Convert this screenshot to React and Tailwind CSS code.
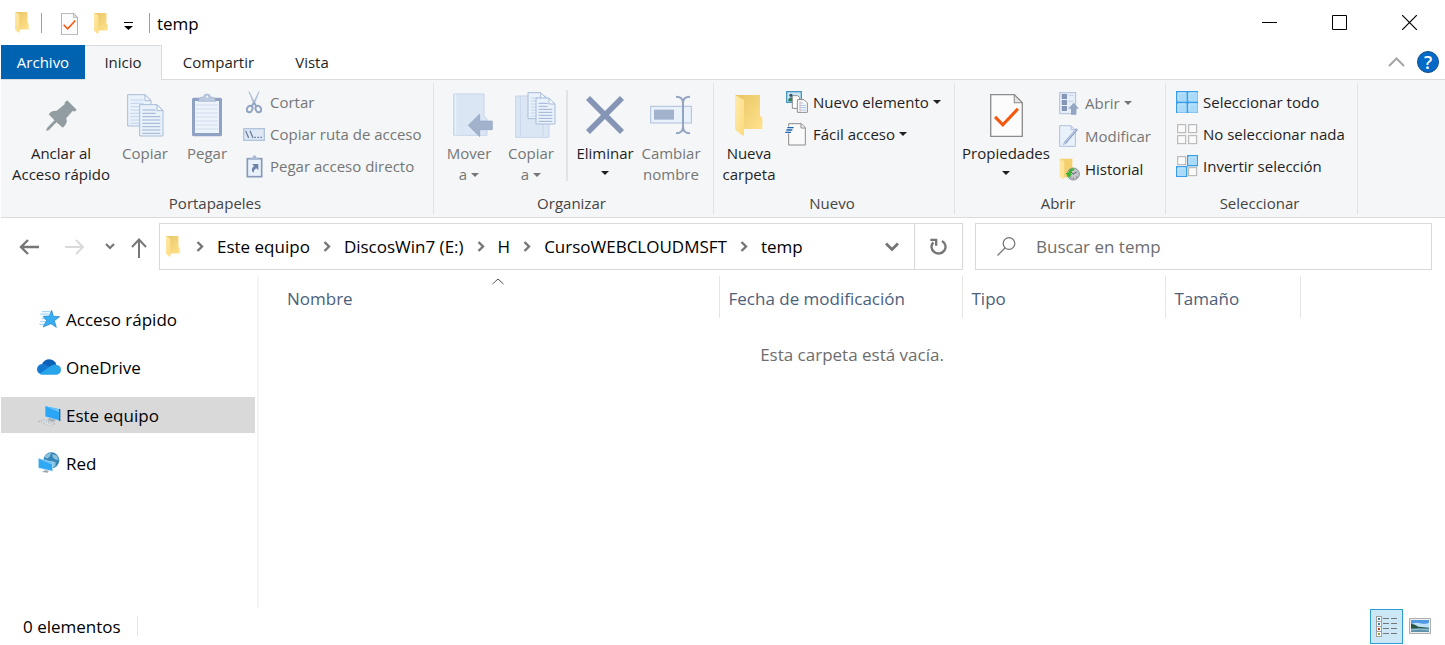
import React from "react";

const ICON = "shrink-0";

function Folder({ w, h }) {
  return (
    <svg className={ICON} width={w} height={h} viewBox="0 0 84 122" preserveAspectRatio="none" aria-hidden="true">
      <defs>
        <linearGradient id="fback" x1="0" y1="0" x2="1" y2="1">
          <stop offset="0" stopColor="#e8c565" />
          <stop offset="1" stopColor="#ffe28c" />
        </linearGradient>
        <linearGradient id="fflap" x1="0" y1="0" x2="1" y2="1">
          <stop offset="0" stopColor="#ffebac" />
          <stop offset="1" stopColor="#fddb7c" />
        </linearGradient>
      </defs>
      <path d="M0 0H75V62L82 68V101H20Z" fill="url(#fback)" />
      <path d="M0 0L27 15V121L20 119L0 103Z" fill="url(#fflap)" />
    </svg>
  );
}

function CheckPage({ w, h }) {
  return (
    <svg className={ICON} width={w} height={h} viewBox="0 0 98 128" aria-hidden="true">
      <path d="M2 2H72L96 26V126H2Z" fill="#fcfcfc" stroke="#8c8c8c" strokeWidth="4" />
      <path d="M72 2V26H96Z" fill="#e6e6e6" stroke="#8c8c8c" strokeWidth="3" />
      <path d="M15 68L38 92L83 44" fill="none" stroke="#f4570d" strokeWidth="9" />
    </svg>
  );
}

function Pin() {
  return (
    <svg className={ICON} width="31" height="31" viewBox="140 296 92 92" aria-hidden="true">
      <path d="M203 297L231 325L226 330L219 329L200 350Q206 364 190 378L171 362L148 386L140 387L143 379L165 356L148 338Q156 327 172 328L196 308L195 304Z" fill="#929da2" />
    </svg>
  );
}

function Sheet({ x, y, w, h, n, faint }) {
  const rows = [];
  for (let i = 0; i < n; i++) rows.push(y + 16 + (i * (h - 24)) / (n - 1));
  return (
    <g>
      <path d={`M${x} ${y}H${x + w - 18}L${x + w} ${y + 18}V${y + h}H${x}Z`} fill="#e9f1fb" stroke="#a9bcd8" strokeWidth="3" />
      {rows.map((r, i) => (
        <path key={i} d={`M${x + 8} ${r}H${x + w - (i < 2 ? 22 : 8)}`} stroke={faint ? "#c3d4ec" : "#9fb3d2"} strokeWidth="3" />
      ))}
      <path d={`M${x + w - 18} ${y}V${y + 18}H${x + w}Z`} fill="#f4f8fd" stroke="#a9bcd8" strokeWidth="3" />
    </g>
  );
}

function CopyIcon() {
  return (
    <svg className={ICON} width="37" height="43" viewBox="0 0 111 129" aria-hidden="true">
      <Sheet x={2} y={2} w={70} h={94} n={8} faint />
      <Sheet x={38} y={32} w={70} h={94} n={8} />
    </svg>
  );
}

function Paste() {
  return (
    <svg className={ICON} width="32" height="44" viewBox="0 0 96 132" aria-hidden="true">
      <rect x="3" y="14" width="90" height="116" rx="5" fill="#8fa2c4" />
      <rect x="12" y="24" width="72" height="96" fill="#edf3fb" />
      {[36, 48, 60, 72, 84, 96, 108].map((y) => (
        <path key={y} d={`M14 ${y}H82`} stroke="#d0deef" strokeWidth="3" />
      ))}
      <path d="M22 25Q22 12 38 12Q38 3 48 3Q58 3 58 12Q74 12 74 25Z" fill="#bccae0" stroke="#9badca" strokeWidth="2" />
      <circle cx="48" cy="11" r="3" fill="#f4f6f8" />
    </svg>
  );
}

function Scissors() {
  return (
    <svg className={ICON} width="16" height="23" viewBox="0 0 48 69" fill="none" aria-hidden="true">
      <path d="M9 2L30 43L24 41ZM39 2L18 43L24 41Z" fill="#b3c2d8" stroke="#b3c2d8" strokeWidth="3" />
      <ellipse cx="11" cy="54" rx="8" ry="10" transform="rotate(25 11 54)" stroke="#91a4c2" strokeWidth="6" />
      <ellipse cx="37" cy="54" rx="8" ry="10" transform="rotate(-25 37 54)" stroke="#91a4c2" strokeWidth="6" />
      <path d="M17 45L24 35L31 45" stroke="#91a4c2" strokeWidth="5" />
    </svg>
  );
}

function PathIcon() {
  return (
    <svg className={ICON} width="22" height="13" viewBox="0 0 66 39" aria-hidden="true">
      <rect x="2" y="2" width="62" height="35" fill="#dfe9f6" stroke="#b2c3dc" strokeWidth="4" />
      <path d="M8 8L17 30M21 8L30 30" stroke="#6e7f9e" strokeWidth="4" />
      <path d="M34 28h5M43 28h5M52 28h5" stroke="#6e7f9e" strokeWidth="4" />
    </svg>
  );
}

function PasteLink() {
  return (
    <svg className={ICON} width="17" height="23" viewBox="0 0 51 69" aria-hidden="true">
      <rect x="4" y="11" width="43" height="54" fill="#e9f1fb" stroke="#8799bb" strokeWidth="5" />
      <path d="M13 14V8H20Q20 1 25 1Q31 1 31 8H38V14Z" fill="#a9b9d3" />
      <path d="M18 27H37V46L31 40Q23 44 22 54Q12 42 24 33Z" fill="#6f82a8" />
    </svg>
  );
}

function MoveTo() {
  return (
    <svg className={ICON} width="48" height="44" viewBox="-24 0 144 132" aria-hidden="true">
      <path d="M2 3H93V70L102 78V127H2Z" fill="#dbe6f5" stroke="#c6d5ea" strokeWidth="3" />
      <path d="M8 4V127" stroke="#edf3fb" strokeWidth="3" />
      <path d="M46 97L80 63V84H118V110H80V131Z" fill="#a3b2cc" stroke="#93a4c1" strokeWidth="2" />
    </svg>
  );
}

function CopyTo() {
  return (
    <svg className={ICON} width="50" height="46" viewBox="-27 0 150 138" aria-hidden="true">
      <path d="M2 12H93V85L102 91V136H2Z" fill="#dbe6f5" stroke="#c6d5ea" strokeWidth="3" />
      <path d="M16 13V136M84 96V136" stroke="#c9d7ea" strokeWidth="3" />
      <Sheet x={39} y={2} w={56} h={78} n={7} faint />
      <Sheet x={63} y={18} w={57} h={78} n={7} />
    </svg>
  );
}

function DeleteX() {
  return (
    <svg className={ICON} width="38" height="38" viewBox="0 0 114 114" aria-hidden="true">
      <path d="M6 6L108 108M108 6L6 108" stroke="#8595b5" strokeWidth="17" />
    </svg>
  );
}

function Rename() {
  return (
    <svg className={ICON} width="42" height="40" viewBox="0 0 126 120" fill="none" aria-hidden="true">
      <rect x="2" y="34" width="122" height="50" fill="#e9f1fb" stroke="#adbfda" strokeWidth="3" />
      <rect x="12" y="44" width="60" height="30" fill="#a3b2cc" />
      <path d="M78 5Q99 5 99 24V96Q99 115 78 115M120 5Q99 5 99 24M99 96Q99 115 120 115" stroke="#93a4c1" strokeWidth="6" />
    </svg>
  );
}

function NewItem() {
  return (
    <svg className={ICON} width="22" height="22" viewBox="0 0 66 66" aria-hidden="true">
      <rect x="2" y="2" width="44" height="32" fill="#c8e8f8" stroke="#4a96bd" strokeWidth="4" />
      <circle cx="15" cy="13" r="5" fill="#35536b" />
      <path d="M6 30Q8 18 18 19L22 32Z" fill="#2e7d5b" />
      <path d="M19 14H35L41 20V52H19Z" fill="#fff" stroke="#8c8c8c" strokeWidth="3" />
      <path d="M34 26H54L64 36V64H34Z" fill="#fff" stroke="#8c8c8c" strokeWidth="3" />
      <path d="M40 36H52M40 43H60M40 50H60M40 57H60" stroke="#9cc3ea" strokeWidth="3" />
      <path d="M42 30V62" stroke="#e89a9a" strokeWidth="2" />
    </svg>
  );
}

function EasyAccess() {
  return (
    <svg className={ICON} width="24" height="23" viewBox="0 0 72 69" aria-hidden="true">
      <path d="M11 2H49L61 14V66H11Z" fill="#fafafa" stroke="#8c8c8c" strokeWidth="3" />
      <path d="M48 2V15H61" fill="none" stroke="#8c8c8c" strokeWidth="3" />
      <path d="M6 14H26M3 21H22M0 28H18" stroke="#f5f6f7" strokeWidth="7" />
      <path d="M7 14H26M4 21H22M1 28H18" stroke="#1e66ad" strokeWidth="4" />
    </svg>
  );
}

function OpenIcon() {
  return (
    <svg className={ICON} width="20" height="23" viewBox="0 0 60 69" aria-hidden="true">
      <rect x="2" y="2" width="48" height="63" fill="#e6eefa" stroke="#afc0da" strokeWidth="3" />
      {[8, 26, 44].map((y) => (
        <g key={y}>
          <rect x="10" y={y} width="12" height="11" fill="#8b9dbd" stroke="#7387ac" strokeWidth="3" />
          <path d={`M28 ${y + 2}H44`} stroke="#c4d2e8" strokeWidth="3" />
        </g>
      ))}
      <path d="M44 32L60 50H52V68H36V50H28Z" fill="#94a5c4" />
    </svg>
  );
}

function EditIcon() {
  return (
    <svg className={ICON} width="20" height="22" viewBox="0 0 60 66" aria-hidden="true">
      <path d="M2 2H36L49 15V64H2Z" fill="#e9f1fb" stroke="#afc0da" strokeWidth="3" />
      <path d="M36 2V14H46" fill="none" stroke="#afc0da" strokeWidth="3" />
      <path d="M54 12L19 53" stroke="#8fa4c8" strokeWidth="8" />
      <path d="M51 14L20 50" stroke="#c9d8ee" strokeWidth="3" />
      <path d="M16 50L23 56L10 61Z" fill="#afc0da" />
    </svg>
  );
}

function HistoryIcon() {
  return (
    <svg className={ICON} width="21" height="23" viewBox="0 0 63 69" aria-hidden="true">
      <path d="M2 2H40V58H10Z" fill="#f3cf6d" />
      <path d="M2 2L16 10V65L2 57Z" fill="#ffe49a" />
      <circle cx="43" cy="48" r="18" fill="#c3c6ca" stroke="#8b8f94" strokeWidth="3" />
      <path d="M34 40L43 48L53 42M34 57h3M52 57h3M43 62v-3M43 34v3" fill="none" stroke="#54585c" strokeWidth="3" />
      <path d="M47 32Q31 30 28 45H20L29 59L40 47H35Q36 38 45 36Z" fill="#35b52c" />
    </svg>
  );
}

function Squares({ on, big }) {
  const cells = [[3, 3], [36, 3], [3, 36], [36, 36]];
  return (
    <svg className={ICON} width="22" height="22" viewBox="0 0 66 66" aria-hidden="true">
      {cells.map(([x, y], i) =>
        on[i] ? (
          <g key={i}>
            <rect x={x - 1} y={y - 1} width={big ? 32 : 30} height={big ? 32 : 30} fill="#a9dafa" stroke="#3a9de8" strokeWidth="4" />
            <path d={`M${x + 3} ${y + 25}V${y + 3}H${x + 25}`} fill="none" stroke="#c9e8fd" strokeWidth="3" />
          </g>
        ) : (
          <rect key={i} x={x + 2} y={y + 2} width="24" height="24" fill="#fafafa" stroke="#b0b0b0" strokeWidth="3" />
        )
      )}
    </svg>
  );
}

function Star() {
  return (
    <svg className={ICON} width="21" height="18" viewBox="0 0 63 54" aria-hidden="true">
      <path d="M9 5H34M3 12H30M4 35H22M1 43H20M8 26H24" stroke="#58b6ee" strokeWidth="2" />
      <path d="M38 1L43 19L62 20L46 32L52 52L36 41L12 51L23 32L12 19L31 18Z" fill="#38aef2" stroke="#1680c9" strokeWidth="2" />
    </svg>
  );
}

function Cloud() {
  return (
    <svg className={ICON} width="24" height="16" viewBox="0 0 72 48" aria-hidden="true">
      <path d="M14 17Q22 1 37 1Q53 2 58 17L44 26Z" fill="#0a61b7" />
      <path d="M15 15Q27 13 40 27L16 46Q0 44 0 31Q1 17 15 15Z" fill="#1278d0" />
      <path d="M56 17Q72 18 72 32Q71 46 58 47H16Q10 47 8 44L40 22Q47 16 56 17Z" fill="#28a4ea" />
    </svg>
  );
}

function Computer() {
  return (
    <svg className={ICON} width="23" height="21" viewBox="0 0 69 63" aria-hidden="true">
      <path d="M21 2L67 12V48L21 35Z" fill="#2ba6f5" stroke="#d4e4ef" strokeWidth="2" />
      <path d="M22 4L65 14V22Z" fill="#71c5fb" />
      <path d="M67 12V48L63 49V12Z" fill="#56636d" />
      <path d="M34 39L54 45L46 51L28 45Z" fill="#a6b0b7" />
      <path d="M0 49L18 44L52 56L35 62Z" fill="#e8ebee" stroke="#a0a8ae" strokeWidth="2" strokeDasharray="5 3" />
      <path d="M8 49L40 58M14 47L46 56" stroke="#a4acb2" strokeWidth="2" strokeDasharray="5 3" />
    </svg>
  );
}

function Network() {
  return (
    <svg className={ICON} width="22" height="22" viewBox="0 0 66 66" aria-hidden="true">
      <circle cx="40" cy="25" r="24" fill="#3786b8" />
      <path d="M20 14Q29 2 39 3L35 14L26 20ZM43 6L57 11L61 25L51 22L44 16ZM38 27L53 30L52 42L43 47Z" fill="#8cc3de" />
      <path d="M1 19L44 31V58L1 48Z" fill="#2fa9f4" stroke="#dcecf5" strokeWidth="2" />
      <path d="M2 21L43 33V38Z" fill="#72c9fb" />
      <path d="M22 54L32 57L30 62L12 60Z" fill="#9da7ae" />
    </svg>
  );
}

function Caret({ className }) {
  return (
    <svg className={className} width="8" height="4" viewBox="0 0 8 4" aria-hidden="true">
      <path d="M0 0H8L4 4Z" fill="currentColor" />
    </svg>
  );
}

function Chevron({ right }) {
  return (
    <svg className={ICON} width={right ? 8 : 14} height={right ? 11 : 9} viewBox={right ? "0 0 8 11" : "0 0 14 9"} fill="none" stroke="#767676" aria-hidden="true">
      {right ? <path d="M1.5 1L6 5.5L1.5 10" strokeWidth="2.4" /> : <path d="M1 1.5L7 7.5L13 1.5" strokeWidth="2.8" />}
    </svg>
  );
}

function Big({ icon, a, b, caret, off, className }) {
  return (
    <button type="button" className={`flex shrink-0 flex-col items-center gap-1 pt-2 leading-[21px] ${off ? "text-[#767676]" : "text-[#1f1f1f]"} ${className}`}>
      <span className="flex h-12 items-center">{icon}</span>
      <span className="flex flex-col items-center whitespace-nowrap">
        <span>{a}</span>
        <span className="flex min-h-[18px] items-center gap-1">
          {b}
          {caret && <Caret />}
        </span>
      </span>
    </button>
  );
}

function Small({ icon, label, caret, off }) {
  return (
    <button type="button" className={`flex h-8 items-center gap-1 whitespace-nowrap ${off ? "text-[#767676]" : "text-[#1f1f1f]"}`}>
      <span className="flex w-6 justify-center">{icon}</span>
      <span>{label}</span>
      {caret && <Caret />}
    </button>
  );
}

function Group({ name, className, pad, children }) {
  return (
    <section aria-label={name} className={`flex shrink-0 flex-col border-r border-[#e1e3e5] ${className}`}>
      <div className={`flex h-[109px] ${pad}`}>{children}</div>
      <h2 className="pr-1 text-center leading-[22px] text-[#444]">{name}</h2>
    </section>
  );
}

const crumbs = ["Este equipo", "DiscosWin7 (E:)", "H", "CursoWEBCLOUDMSFT", "temp"];
const places = [
  { name: "Acceso rápido", icon: <Star /> },
  { name: "OneDrive", icon: <Cloud /> },
  { name: "Este equipo", icon: <Computer />, active: true },
  { name: "Red", icon: <Network /> },
];

export default function App() {
  return (
    <div className="flex min-h-screen flex-col overflow-x-hidden bg-white pl-px font-['Open_Sans','Noto_Sans',sans-serif] text-[15px] text-black">
      <header className="flex h-[45px] items-center">
        <div className="flex flex-1 items-center">
          <span className="ml-3.5"><Folder w={14} h={21} /></span>
          <span className="ml-3 h-5 w-px bg-[#a0a0a0]" />
          <button type="button" aria-label="Propiedades" className="ml-[19px] pt-0.5"><CheckPage w={17} h={22} /></button>
          <button type="button" aria-label="Nueva carpeta" className="ml-4 pt-0.5"><Folder w={14} h={21} /></button>
          <button type="button" aria-label="Personalizar barra de acceso rápido" className="ml-4 pt-1.5">
            <svg width="9" height="8" viewBox="0 0 9 8" aria-hidden="true"><path d="M0 0H9V1H0ZM0 4H9L4.500 8Z" /></svg>
          </button>
          <span className="ml-4 h-5 w-px bg-[#a0a0a0]" />
          <h1 className="ml-[7px] pt-0.5 text-[17px]">temp</h1>
        </div>
        <div className="flex pr-px">
          <button type="button" aria-label="Minimizar" className="flex h-11 w-[70px] items-center justify-center">
            <svg width="15" height="15" viewBox="0 0 15 15" aria-hidden="true"><path d="M0 7.500H15" stroke="#000" /></svg>
          </button>
          <button type="button" aria-label="Maximizar" className="flex h-11 w-[70px] items-center justify-center">
            <svg width="15" height="15" viewBox="0 0 15 15" fill="none" aria-hidden="true"><path d="M.5 .5H14.500V14.500H.5Z" stroke="#000" /></svg>
          </button>
          <button type="button" aria-label="Cerrar" className="flex h-11 w-[70px] items-center justify-center">
            <svg width="15" height="15" viewBox="0 0 15 15" aria-hidden="true"><path d="M0 0L15 15M15 0L0 15" stroke="#000" strokeWidth="1.200" /></svg>
          </button>
        </div>
      </header>

      <nav aria-label="Cinta" className="flex h-[35px] items-stretch text-[#1f1f1f]">
        <button type="button" className="w-[84px] border-b border-[#d9dbdd] bg-[#0063b1] text-white">Archivo</button>
        <button type="button" className="w-[77px] border-t border-r border-[#d9dbdd] bg-[#f5f6f7] pb-0.5">Inicio</button>
        <button type="button" className="w-[113px] border-b border-[#d9dbdd]">Compartir</button>
        <button type="button" className="w-[74px] border-b border-[#d9dbdd]">Vista</button>
        <span className="flex flex-1 items-center justify-end gap-3 border-b border-[#d9dbdd] pr-1.5">
          <button type="button" aria-label="Minimizar la cinta">
            <svg width="17" height="10" viewBox="0 0 17 10" fill="none" aria-hidden="true"><path d="M1 9L8.500 1.500L16 9" stroke="#a6a6a6" strokeWidth="2" /></svg>
          </button>
          <button type="button" aria-label="Ayuda" className="flex size-[22px] items-center justify-center rounded-full border border-[#174f86] bg-[#0569c8] text-lg leading-5 font-semibold text-white">?</button>
        </span>
      </nav>

      <div className="flex border-b border-[#d9dbdd] bg-[#f5f6f7] py-[3px]">
        <Group name="Portapapeles" className="w-[433px]" pad="pl-[7px]">
          <Big className="w-[106px]" icon={<Pin />} a="Anclar al" b="Acceso rápido" />
          <Big className="w-[62px]" off icon={<CopyIcon />} a="Copiar" />
          <Big className="w-[62px]" off icon={<Paste />} a="Pegar" />
          <div className="ml-1 flex flex-col pt-[3px]">
            <Small off icon={<Scissors />} label="Cortar" />
            <Small off icon={<PathIcon />} label="Copiar ruta de acceso" />
            <Small off icon={<PasteLink />} label="Pegar acceso directo" />
          </div>
        </Group>
        <Group name="Organizar" className="w-[280px]" pad="pl-1">
          <Big className="w-[62px]" off caret icon={<MoveTo />} a="Mover" b="a" />
          <Big className="w-[62px]" off caret icon={<CopyTo />} a="Copiar" b="a" />
          <span className="mx-1 mt-[7px] h-[91px] w-0.5 bg-[#e1e3e5]" />
          <Big className="w-[66px]" caret icon={<DeleteX />} a="Eliminar" />
          <Big className="w-[66px]" off icon={<Rename />} a="Cambiar" b="nombre" />
        </Group>
        <Group name="Nuevo" className="w-[241px]" pad="pl-0.5">
          <Big className="w-[66px]" icon={<Folder w={28} h={41} />} a="Nueva" b="carpeta" />
          <div className="ml-[3px] flex flex-col pt-[3px]">
            <Small caret icon={<NewItem />} label="Nuevo elemento" />
            <Small caret icon={<EasyAccess />} label="Fácil acceso" />
          </div>
        </Group>
        <Group name="Abrir" className="w-[211px]" pad="pl-0.5">
          <Big className="w-[98px]" caret icon={<CheckPage w={33} h={43} />} a="Propiedades" />
          <div className="ml-0.5 flex flex-col gap-px pt-1">
            <Small off caret icon={<OpenIcon />} label="Abrir" />
            <Small off icon={<EditIcon />} label="Modificar" />
            <Small icon={<HistoryIcon />} label="Historial" />
          </div>
        </Group>
        <Group name="Seleccionar" className="w-[192px]" pad="pl-[9px]">
          <div className="flex flex-col pt-[3px]">
            <Small icon={<Squares big on={[1, 1, 1, 1]} />} label="Seleccionar todo" />
            <Small icon={<Squares on={[0, 0, 0, 0]} />} label="No seleccionar nada" />
            <Small icon={<Squares on={[0, 1, 1, 0]} />} label="Invertir selección" />
          </div>
        </Group>
      </div>

      <div className="flex items-center pt-[5px] pr-[13px] pb-1.5 text-[17px]">
        <div className="flex w-[158px] shrink-0 items-center pl-[18px]">
          <button type="button" aria-label="Atrás">
            <svg width="21" height="16" viewBox="0 0 21 16" fill="none" stroke="#767676" strokeWidth="2.400" aria-hidden="true"><path d="M20 8H2M9 1L2 8L9 15" /></svg>
          </button>
          <button type="button" aria-label="Adelante" className="ml-6">
            <svg width="21" height="16" viewBox="0 0 21 16" fill="none" stroke="#dadada" strokeWidth="2" aria-hidden="true"><path d="M1 8H19M12 1L19 8L12 15" /></svg>
          </button>
          <button type="button" aria-label="Ubicaciones recientes" className="ml-5">
            <svg width="10" height="7" viewBox="0 0 10 7" fill="none" stroke="#767676" strokeWidth="2.200" aria-hidden="true"><path d="M1 1L5 5L9 1" /></svg>
          </button>
          <button type="button" aria-label="Subir" className="ml-4 pt-0.5">
            <svg width="16" height="20" viewBox="0 0 16 20" fill="none" stroke="#767676" strokeWidth="2" aria-hidden="true"><path d="M8 20V2M1 9L8 1.500L15 9" /></svg>
          </button>
        </div>
        <div className="grid flex-1 grid-cols-[804fr_457fr] gap-3">
          <div className="flex h-[47px] border border-[#d9d9d9]">
            <ol className="flex flex-1 items-center pl-1.5 whitespace-nowrap">
              <li className="mr-4"><Folder w={14} h={21} /></li>
              {crumbs.map((c, i) => (
                <li key={c} className={`flex items-center gap-[13px] ${i ? "pl-[13px]" : ""}`}>
                  <Chevron right />
                  <a href="#" className="text-black">{c}</a>
                </li>
              ))}
            </ol>
            <button type="button" aria-label="Ubicaciones anteriores" className="flex w-11 items-center justify-center"><Chevron /></button>
            <button type="button" aria-label="Actualizar" className="flex w-12 items-center justify-center border-l border-[#d9d9d9]">
              <svg width="17" height="17" viewBox="0 0 51 51" fill="none" aria-hidden="true">
                <path d="M36 9A21 20 0 1 1 10 13" stroke="#767676" strokeWidth="7" />
                <path d="M1 2H22V23H15V9H1Z" fill="#767676" />
              </svg>
            </button>
          </div>
          <label className="flex h-[47px] items-center gap-5 border border-[#d9d9d9] pl-[21px]">
            <svg className={ICON} width="19" height="19" viewBox="0 0 19 19" fill="none" stroke="#767676" strokeWidth="1.300" aria-hidden="true">
              <circle cx="12" cy="6.500" r="5.800" />
              <path d="M8 11L.5 18.500" />
            </svg>
            <input aria-label="Buscar en temp" placeholder="Buscar en temp" className="min-w-0 flex-1 bg-transparent outline-none placeholder:text-[#6d6d6d]" />
          </label>
        </div>
      </div>

      <main className="flex flex-1 text-[17px]">
        <nav aria-label="Ubicaciones" className="w-[258px] shrink-0 border-r-2 border-[#f5f5f5] pt-[25px]">
          <ul className="flex flex-col gap-3">
            {places.map((p) => (
              <li key={p.name}>
                <a href="#" className={`mr-0.5 flex h-9 items-center gap-1 pl-[35px] ${p.active ? "bg-[#d9d9d9]" : ""}`}>
                  <span className="flex w-[26px] justify-center">{p.icon}</span>
                  <span className="pt-0.5">{p.name}</span>
                </a>
              </li>
            ))}
          </ul>
        </nav>
        <div className="min-w-0 flex-1">
          <table className="w-full table-fixed border-collapse text-left">
            <thead className="text-[#4c607a]">
              <tr className="h-[42px]">
                <th aria-sort="ascending" className="relative w-[460px] border-r border-[#e5e5e5] pt-[3px] pl-7 font-normal">
                  Nombre
                  <svg className="absolute top-0.5 left-[233px]" width="12" height="7" viewBox="0 0 12 7" fill="none" aria-hidden="true"><path d="M.5 6L6 1L11.500 6" stroke="#555" /></svg>
                </th>
                <th className="w-[243px] border-r border-[#e5e5e5] pt-[3px] pl-[9px] font-normal whitespace-nowrap">Fecha de modificación</th>
                <th className="w-[203px] border-r border-[#e5e5e5] pt-[3px] pl-[9px] font-normal">Tipo</th>
                <th className="w-[135px] border-r border-[#e5e5e5] pt-[3px] pl-[9px] font-normal">Tamaño</th>
                <td />
              </tr>
            </thead>
            <tbody>
              <tr>
                <td colSpan={5} className="pt-6 text-center text-[#6d6d6d]">Esta carpeta está vacía.</td>
              </tr>
            </tbody>
          </table>
        </div>
      </main>

      <footer className="flex h-[37px] items-center pb-px">
        <span className="border-r border-[#e5e5e5] pt-0.5 pr-4 pl-[22px] text-[17px] leading-[18px]">0 elementos</span>
        <span className="flex-1" />
        <button type="button" aria-label="Detalles" className="flex h-[35px] w-[33px] items-center justify-center border border-[#2f9fd3] bg-[#cce8f6]">
          <svg width="22" height="21" viewBox="0 0 22 21" aria-hidden="true">
            {[["#3a7ca8", 0], ["#3a7ca8", 5], ["#c43c1c", 10], ["#8aa02e", 15]].map(([c, y]) => (
              <g key={y}>
                <rect x=".5" y={y + 0.5} width="5" height="5" fill="#fff" stroke="#a0a0a0" />
                <rect x="2" y={y + 2} width="2" height="2" fill={c} />
                <path d={`M7 ${y + 2.5}H13M15 ${y + 2.5}H21`} stroke="#767676" />
              </g>
            ))}
          </svg>
        </button>
        <button type="button" aria-label="Iconos grandes" className="mr-3.5 ml-1.5">
          <svg width="22" height="16" viewBox="0 0 66 48" aria-hidden="true">
            <rect x="2" y="2" width="62" height="44" fill="#fff" stroke="#a0a0a0" strokeWidth="3" />
            <rect x="6" y="6" width="54" height="36" fill="#4f9ae0" />
            <path d="M6 18Q22 12 34 16T60 14V30H6Z" fill="#bfe0f7" />
            <path d="M6 17Q18 19 28 26L60 29V32H6Z" fill="#27553f" />
            <path d="M6 31H60V42H6Z" fill="#5f93ab" />
            <path d="M6 36Q30 30 60 36" fill="none" stroke="#c4dfea" strokeWidth="2" />
          </svg>
        </button>
      </footer>
    </div>
  );
}
